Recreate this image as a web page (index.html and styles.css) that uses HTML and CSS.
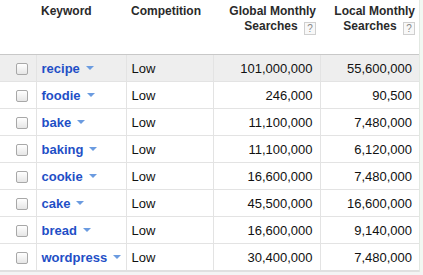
FILE: index.html
```html
<!DOCTYPE html>
<html lang="en">
<head>
    <meta charset="UTF-8">
    <title>Keyword Ideas</title>
    <link rel="stylesheet" href="styles.css">
</head>
<body>
    <div class="results">
        <table class="keyword-table">
            <thead>
                <tr>
                    <th class="col-check"></th>
                    <th class="col-keyword">Keyword</th>
                    <th class="col-comp">Competition</th>
                    <th class="col-num col-global">Global Monthly<br>Searches <span class="help">?</span></th>
                    <th class="col-num col-local">Local Monthly<br>Searches <span class="help">?</span></th>
                </tr>
            </thead>
            <tbody>
                <tr class="highlight">
                    <td class="col-check"><span class="checkbox"></span></td>
                    <td class="col-keyword"><a href="#">recipe</a><span class="caret"></span></td>
                    <td>Low</td>
                    <td class="num">101,000,000</td>
                    <td class="num">55,600,000</td>
                </tr>
                <tr>
                    <td class="col-check"><span class="checkbox"></span></td>
                    <td class="col-keyword"><a href="#">foodie</a><span class="caret"></span></td>
                    <td>Low</td>
                    <td class="num">246,000</td>
                    <td class="num">90,500</td>
                </tr>
                <tr>
                    <td class="col-check"><span class="checkbox"></span></td>
                    <td class="col-keyword"><a href="#">bake</a><span class="caret"></span></td>
                    <td>Low</td>
                    <td class="num">11,100,000</td>
                    <td class="num">7,480,000</td>
                </tr>
                <tr>
                    <td class="col-check"><span class="checkbox"></span></td>
                    <td class="col-keyword"><a href="#">baking</a><span class="caret"></span></td>
                    <td>Low</td>
                    <td class="num">11,100,000</td>
                    <td class="num">6,120,000</td>
                </tr>
                <tr>
                    <td class="col-check"><span class="checkbox"></span></td>
                    <td class="col-keyword"><a href="#">cookie</a><span class="caret"></span></td>
                    <td>Low</td>
                    <td class="num">16,600,000</td>
                    <td class="num">7,480,000</td>
                </tr>
                <tr>
                    <td class="col-check"><span class="checkbox"></span></td>
                    <td class="col-keyword"><a href="#">cake</a><span class="caret"></span></td>
                    <td>Low</td>
                    <td class="num">45,500,000</td>
                    <td class="num">16,600,000</td>
                </tr>
                <tr>
                    <td class="col-check"><span class="checkbox"></span></td>
                    <td class="col-keyword"><a href="#">bread</a><span class="caret"></span></td>
                    <td>Low</td>
                    <td class="num">16,600,000</td>
                    <td class="num">9,140,000</td>
                </tr>
                <tr>
                    <td class="col-check"><span class="checkbox"></span></td>
                    <td class="col-keyword"><a href="#">wordpress</a><span class="caret"></span></td>
                    <td>Low</td>
                    <td class="num">30,400,000</td>
                    <td class="num">7,480,000</td>
                </tr>
            </tbody>
        </table>
        <div class="side-strip"></div>
    </div>
</body>
</html>
```

FILE: styles.css
```css
body {
    margin: 0;
    background-color: #f4f4f4;
    font-family: "Liberation Sans", Arial, Helvetica, sans-serif;
    color: #222;
}
.results {
    display: flex;
    width: 423px;
    background-color: #ffffff;
}
.side-strip {
    width: 3px;
    border-left: 1px solid #e2e8e2;
    background-color: #f2f8f2;
}
.keyword-table {
    width: 419px;
    border-collapse: collapse;
    table-layout: fixed;
    border-bottom: 2px solid #e0e0e0;
}
.keyword-table th {
    height: 54px;
    padding: 4px 4px 0 5px;
    vertical-align: top;
    text-align: left;
    font-size: 12px;
    font-weight: bold;
    line-height: 15px;
    color: #2a2a2a;
    border-bottom: 1px solid #c8c8c8;
    box-sizing: border-box;
}
.keyword-table th.col-num {
    text-align: right;
}
.col-check { width: 36px; }
.col-keyword { width: 90px; }
.col-comp { width: 87px; }
.col-global { width: 107px; }
.keyword-table td {
    height: 25px;
    padding: 1px 5px 0;
    font-size: 13px;
    color: #111;
    border-bottom: 1px solid #e3e3e3;
    border-right: 1px solid #e3e3e3;
    white-space: nowrap;
}
.keyword-table td:last-child {
    border-right: none;
}
.keyword-table td.num {
    text-align: right;
    padding-right: 7px;
}
.keyword-table td.col-check {
    padding: 1px 0 0 16px;
}
.highlight td {
    background-color: #eeeeee;
}
.checkbox {
    display: block;
    width: 10px;
    height: 10px;
    margin-top: 2px;
    border: 1px solid #a8a8a8;
    border-radius: 2px;
    background: linear-gradient(#ffffff, #e6e6e6);
}
.col-keyword a {
    color: #1f4fc6;
    font-weight: bold;
    text-decoration: none;
}
.caret {
    display: inline-block;
    width: 0;
    height: 0;
    margin-left: 6px;
    vertical-align: 3px;
    border-left: 4px solid transparent;
    border-right: 4px solid transparent;
    border-top: 4px solid #6b9be0;
}
.help {
    display: inline-block;
    width: 10px;
    height: 11px;
    margin-left: 3px;
    border: 1px solid #cfcfcf;
    background-color: #f8f8f8;
    color: #888;
    font-size: 10px;
    font-weight: normal;
    line-height: 11px;
    text-align: center;
    vertical-align: -2px;
}
```
